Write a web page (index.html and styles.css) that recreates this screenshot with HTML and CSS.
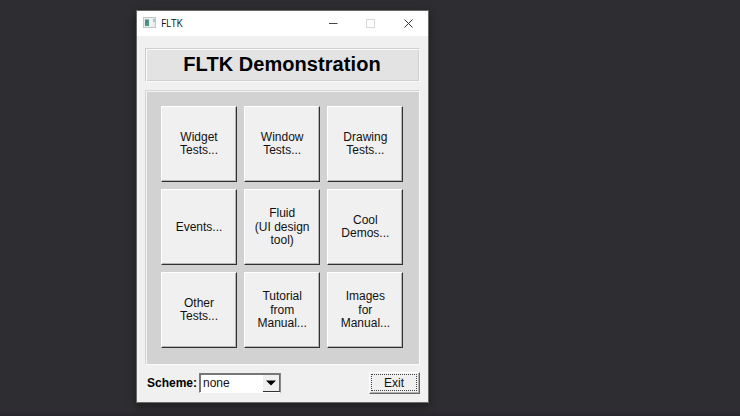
FILE: index.html
```
<!DOCTYPE html>
<html lang="en">
<head>
<meta charset="utf-8">
<title>FLTK</title>
<link rel="stylesheet" href="styles.css">
</head>
<body>
<main class="window">
  <header class="titlebar">
    <svg class="app-icon" width="13" height="11" viewBox="0 0 13 11">
      <defs><linearGradient id="g" x1="0" y1="0" x2="1" y2="1"><stop offset="0" stop-color="#4d7f9c"/><stop offset="1" stop-color="#4fa07b"/></linearGradient></defs>
      <rect x=".5" y=".5" width="12" height="10" fill="#e9ecec" stroke="#c3c7ca"/>
      <rect x="2" y="2.500" width="4" height="6.500" fill="url(#g)"/>
      <rect x="7.500" y="2" width="2" height="7" fill="#f5f5f2"/>
      <rect x="10" y="2" width="2" height="3" fill="#a5c9c6"/>
    </svg>
    <span class="title">FLTK</span>
    <svg class="controls" width="88" height="12" viewBox="0 0 88 12" fill="none">
      <path d="M1 6.500h8.500" stroke="#444"/>
      <rect x="38.500" y="2.500" width="8" height="8" stroke="#d8d8d8"/>
      <path d="M76.500 2.500l8 8M84.500 2.500l-8 8" stroke="#333" stroke-width="1"/>
    </svg>
  </header>
  <h1 class="heading">FLTK Demonstration</h1>
  <section class="panel">
    <button class="demo">Widget<br>Tests...</button>
    <button class="demo">Window<br>Tests...</button>
    <button class="demo">Drawing<br>Tests...</button>
    <button class="demo">Events...</button>
    <button class="demo">Fluid<br>(UI design<br>tool)</button>
    <button class="demo">Cool<br>Demos...</button>
    <button class="demo">Other<br>Tests...</button>
    <button class="demo">Tutorial<br>from<br>Manual...</button>
    <button class="demo">Images<br>for<br>Manual...</button>
  </section>
  <footer class="footer">
    <span class="label">Scheme:</span>
    <div class="choice"><span class="value">none</span><span class="drop"><svg width="10" height="6" viewBox="0 0 10 6"><path d="M0 .5h10L5 5.500z" fill="#000"/></svg></span></div>
    <button class="exit"><span class="focus">Exit</span></button>
  </footer>
</main>
</body>
</html>
```
FILE: styles.css
```
* { box-sizing: border-box; }
body {
  margin: 0;
  height: 416px;
  overflow: hidden;
  padding: 10px 0 0 136px;
  background: linear-gradient(#2e2d31 0 411px, #29252d 416px);
  font: 12px/13.3px "Liberation Sans", Arial, sans-serif;
  color: #111;
}
button { font: inherit; color: inherit; padding: 0; border-radius: 0; }
.window {
  width: 293px;
  height: 393px;
  border: 1px solid #69696a;
  background: #f0f0f0;
  box-shadow: 0 3px 9px rgba(0, 0, 0, .4);
}
.titlebar {
  display: flex;
  align-items: center;
  height: 25px;
  padding: 0 13px 0 6px;
  background: #fff;
}
.app-icon { margin-top: -2px; }
.title {
  margin: -1px 0 0 5px;
  font: 10px/14px "Open Sans", sans-serif;
  letter-spacing: -.15px;
}
.controls { margin: -2px -1px 0 auto; }
.heading {
  height: 34px;
  width: 275px;
  margin: 12px 0 0 8px;
  padding-right: 1px;
  border: 1px solid #cfcfcf;
  border-right-color: #fafafa;
  border-bottom-color: #fafafa;
  box-shadow: inset 1px 1px #fafafa, inset -1px -1px #cfcfcf;
  background: #e3e3e3;
  text-align: center;
  font-size: 20px;
  letter-spacing: .06px;
  line-height: 31px;
  font-weight: bold;
  color: #000;
}
.panel {
  display: grid;
  grid-template-columns: repeat(3, 76px);
  grid-auto-rows: 76px;
  gap: 7.2px;
  width: 275px;
  height: 275px;
  margin: 8px 0 0 8px;
  padding: 15px;
  border: 1px solid #d5d5d5;
  border-right-color: #fafafa;
  border-bottom-color: #fafafa;
  box-shadow: inset 1px 1px #f4f4f4;
  background: #d2d2d2;
}
.demo {
  border: 1px solid #fff;
  border-right-color: #303030;
  border-bottom-color: #303030;
  box-shadow: inset -1px -1px #b5b5b5;
  background: #f0f0f0;
}
.footer {
  display: flex;
  align-items: flex-start;
  margin: 7px 8px 0 10px;
}
.label {
  width: 52px;
  padding-top: 5px;
  font-weight: bold;
  color: #000;
}
.choice {
  display: flex;
  width: 82px;
  height: 20px;
  margin-top: 1px;
  border: 1px solid #777;
  border-right-color: #888;
  border-bottom-color: #fcfcfc;
  box-shadow: inset 1px 1px #777;
  background: #fff;
}
.value { flex: 1; padding: 3px 0 0 3px; }
.drop {
  display: flex;
  align-items: center;
  justify-content: center;
  width: 17px;
  margin-top: 1px;
  background: #f0f0f0;
  border-right: 1px solid #666;
  border-bottom: 1px solid #333;
}
.exit {
  width: 51px;
  height: 22px;
  margin-left: auto;
  padding: 1px 2px 2px 1px;
  border: 1px solid #fff;
  border-right-color: #666;
  border-bottom-color: #666;
  box-shadow: inset -1px -1px #b0b0b0;
  background: #f0f0f0;
}
.focus {
  display: block;
  height: 17px;
  border: 1px dotted #444;
  line-height: 16px;
}
```
